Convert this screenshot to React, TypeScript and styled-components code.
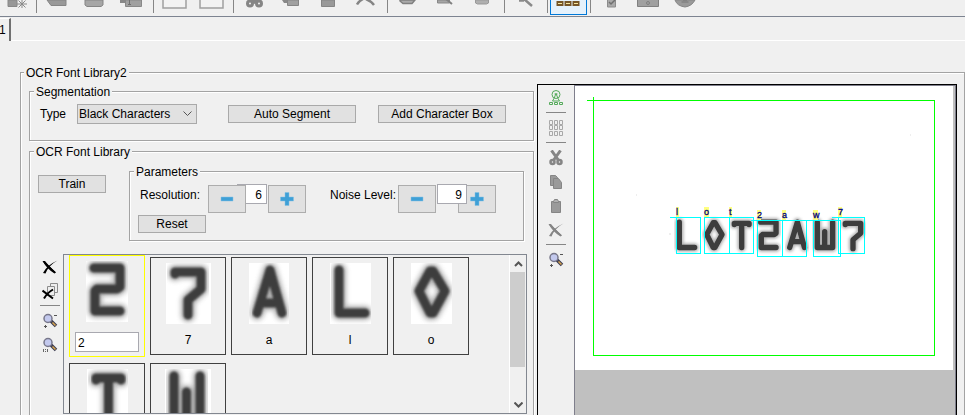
import React from 'react';
import styled, { createGlobalStyle } from 'styled-components';

const GlobalStyle = createGlobalStyle`
  *, *::before, *::after { box-sizing: border-box; }
  html, body { margin: 0; padding: 0; background: #f0f0f0; }
  body, button, input, select {
    font-family: "Liberation Sans", Arial, sans-serif;
    font-size: 12px;
    line-height: 15px;
    color: #000;
  }
`;

const Window = styled.div`
  display: flex;
  flex-direction: column;
  height: 100vh;
  overflow: hidden;
  background: #f0f0f0;
`;

const Toolbar = styled.div`
  display: flex;
  flex: none;
  height: 17px;
  overflow: hidden;
  border-bottom: 1px solid #7d8491;
`;

const ToolButton = styled.button<{ $active?: boolean }>`
  flex: none;
  display: flex;
  justify-content: center;
  align-items: flex-start;
  width: 37px;
  height: 15px;
  padding: 0;
  border: 1px solid ${p => (p.$active ? '#0078d7' : 'transparent')};
  border-top: 0;
  background: ${p => (p.$active ? '#e5f1fb' : 'transparent')};
  overflow: hidden;

  &:first-child { width: 33px; }

  svg { flex: none; display: block; }
`;

const Separator = styled.div`
  flex: none;
  width: 6px;
  height: 13px;
  border-left: 1px solid #868686;
  margin-left: 3px;
  margin-right: -3px;
`;

const TabStrip = styled.nav`
  display: flex;
  flex: none;
  height: 25px;
  margin-top: 1px;
`;

const Tab = styled.button`
  width: 11px;
  height: 23px;
  padding: 0;
  text-align: left;
  text-indent: -1px;
  border: 0;
  border-top: 1px solid #fff;
  border-right: 2px solid #707070;
  background: transparent;
`;

const TabRule = styled.div`
  flex: 1;
  height: 23px;
  border-bottom: 1px solid #fff;
`;

const Group = styled.fieldset`
  min-width: 0;
  margin: 0;
  padding: 0;
  border: 1px solid #a3a3a3;
  box-shadow: 1px 1px 0 #fff, inset 1px 1px 0 #fff;
`;

const Legend = styled.legend<{ $inset?: number }>`
  height: 15px;
  margin-left: ${p => p.$inset ?? 4}px;
  padding: 0 2px;
  background: #f0f0f0;
  line-height: 17px;
  white-space: nowrap;
`;

const MainGroup = styled(Group)`
  display: grid;
  flex: 1;
  min-height: 0;
  grid-template-columns: minmax(0, 505fr) minmax(0, 420fr);
  grid-template-rows: minmax(0, 1fr);
  column-gap: 3px;
  margin: 22px 0 0 20px;
  padding: 0 7px 0 8px;
  border-bottom: 0;
`;

const LeftColumn = styled.div`
  display: flex;
  flex-direction: column;
  gap: 3px;
  min-height: 0;
  padding-top: 4px;
`;

const SegmentRow = styled.div`
  display: grid;
  grid-template-columns: auto 129px 128px 128px;
  justify-content: start;
  align-items: center;
  column-gap: 22px;
  padding: 5px 10px 16px;
`;

const TypeLabel = styled.label`
  width: 46px;
  margin-right: -31px;
  padding-top: 1px;
`;

const SelectFrame = styled.span`
  position: relative;
  display: block;
  width: 120px;

  svg { position: absolute; right: 5px; top: 7px; pointer-events: none; }
`;

const Select = styled.select`
  display: block;
  width: 100%;
  height: 20px;
  padding: 1px 20px 0 1px;
  appearance: none;
  border: 1px solid #a9a9a9;
  border-radius: 0;
  background: #e1e1e1;
`;

const PushButton = styled.button<{ $width: number }>`
  flex: none;
  width: ${p => p.$width}px;
  height: 18px;
  padding: 1px 0 0;
  border: 1px solid #a9a9a9;
  background: #e1e1e1;
  line-height: 15px;
  white-space: nowrap;
`;

const LibraryGroup = styled(Group)`
  display: flex;
  flex-direction: column;
  flex: 1;
  min-height: 0;
  border-bottom: 0;
`;

const TrainRow = styled.div`
  display: flex;
  align-items: flex-start;
  gap: 23px;
  padding: 5px 9px 13px 8px;

  > button { margin-top: 11px; }
`;

const ParameterGroup = styled(Group)`
  flex: 1;
  padding: 5px 10px 7px 8px;
`;

const ParameterRow = styled.div`
  display: flex;
  align-items: flex-start;
  height: 31px;
`;

const ParameterLabel = styled.label<{ $width: number }>`
  width: ${p => p.$width}px;
  padding: 4px 0 0 2px;
  white-space: nowrap;
`;

const Gap = styled.span`
  width: 22px;
`;

const StepButton = styled.button<{ $shift?: number; $front?: boolean }>`
  position: relative;
  z-index: ${p => (p.$front ? 2 : 0)};
  flex: none;
  display: grid;
  place-items: center;
  width: 38px;
  height: 28px;
  margin: 1px 0 0 ${p => p.$shift ?? 0}px;
  padding: 0;
  border: 1px solid #adadad;
  background: #e1e1e1;
`;

const NumberField = styled.input<{ $shift: number }>`
  position: relative;
  z-index: 1;
  width: 30px;
  height: 20px;
  margin-left: ${p => p.$shift}px;
  padding: 2px 4px 0;
  border: 1px solid #a9a9b0;
  border-radius: 0;
  background: #fff;
  text-align: right;
`;

const LibraryRow = styled.div`
  display: flex;
  flex: 1;
  min-height: 0;
  gap: 1px;
  padding: 0 6px 1px 8px;
`;

const SideTools = styled.div<{ $width: number }>`
  flex: none;
  display: flex;
  flex-direction: column;
  align-items: center;
  width: ${p => p.$width}px;
  padding-top: 1px;
`;

const SideButton = styled.button`
  flex: none;
  display: grid;
  place-items: center;
  width: 24px;
  height: 24px;
  padding: 0;
  border: 0;
  background: transparent;
`;

const SideRule = styled.div`
  flex: none;
  width: 20px;
  height: 1px;
  margin: 2px 0 3px;
  background: #868686;
`;

const ListFrame = styled.div`
  display: flex;
  flex: 1;
  min-width: 0;
  border: 1px solid #828790;
  overflow: hidden;
`;

const GlyphGrid = styled.div`
  display: grid;
  flex: 1;
  grid-template-columns: repeat(auto-fill, 76px);
  align-content: start;
  align-items: center;
  gap: 6px 5px;
  padding-left: 5px;
  overflow: hidden;
`;

const GlyphCell = styled.div<{ $selected?: boolean }>`
  display: flex;
  flex-direction: column;
  align-items: center;
  height: ${p => (p.$selected ? 102 : 98)}px;
  padding-top: 5px;
  border: 1px solid ${p => (p.$selected ? '#ffff00' : '#404040')};
  background: #f0f0f0;
`;

const GlyphName = styled.span`
  margin-top: 9px;
`;

const GlyphInput = styled.input`
  width: 64px;
  height: 20px;
  margin-top: 10px;
  padding: 2px 2px 0;
  border: 1px solid #a9a9b0;
  border-radius: 0;
  background: #fff;
`;

const ScrollBar = styled.div`
  flex: none;
  display: flex;
  flex-direction: column;
  width: 17px;
  border-left: 1px solid #fff;
`;

const ScrollButton = styled.button`
  flex: none;
  display: grid;
  place-items: center;
  height: 17px;
  padding: 0;
  border: 0;
  background: transparent;
`;

const ScrollTrack = styled.div`
  flex: 1;
`;

const ScrollThumb = styled.div`
  width: 15px;
  height: 77%;
  background: #cdcdcd;
`;

const ViewerPanel = styled.section`
  display: flex;
  min-height: 0;
  margin-top: 4px;
  border: 1px solid #000;
  border-bottom: 0;
`;

const ImageArea = styled.div`
  flex: 1;
  min-width: 0;
  padding-right: 2px;
  border: 1px solid #7f7f8c;
  border-bottom: 0;
  background: #c0c0c0;
  overflow: hidden;

  svg { display: block; width: 100%; height: auto; background: #fff; }
`;

type GlyphKey = '2' | '7' | 'a' | 'l' | 'o' | 't' | 'w';

const glyphPaths: Record<GlyphKey, string> = {
  '2': 'M8 7H34V26L31 28H11L9 30V50H34',
  '7': 'M9 11V9H35V26L22 37V52',
  a: 'M8 50L21 7L33 50M12 40H30',
  l: 'M9 7V50H35',
  o: 'M19 8H22L34 28L22 50H19L8 28Z',
  t: 'M9 11V9H34V11M21.500 9V50',
  w: 'M9 7V50H35V7M21.500 23V49',
};

const GlyphShape = ({ name, soft }: { name: GlyphKey; soft: string }) => (
  <g fill="none" strokeLinecap="round" strokeLinejoin="round">
    <path d={glyphPaths[name]} stroke="#7a7a7a" strokeWidth="14" opacity="0.600" filter={`url(#${soft}-halo)`} />
    <path d={glyphPaths[name]} stroke="#3c3c3c" strokeWidth="9" filter={`url(#${soft}-edge)`} />
  </g>
);

const SoftFilters = ({ id }: { id: string }) => (
  <defs>
    <filter id={`${id}-halo`} x="-30%" y="-30%" width="160%" height="160%">
      <feGaussianBlur stdDeviation="2.500" />
    </filter>
    <filter id={`${id}-edge`} x="-20%" y="-20%" width="140%" height="140%">
      <feGaussianBlur stdDeviation="1" />
    </filter>
  </defs>
);

const GlyphPicture = ({ name, width }: { name: GlyphKey; width: number }) => (
  <svg width={width} height="61" viewBox={`0 0 ${width} 61`} aria-hidden="true">
    <SoftFilters id={`thumb-${name}`} />
    <rect width={width} height="61" fill="#fff" />
    <GlyphShape name={name} soft={`thumb-${name}`} />
  </svg>
);

const library: { name: GlyphKey; width: number }[] = [
  { name: '2', width: 42 },
  { name: '7', width: 45 },
  { name: 'a', width: 40 },
  { name: 'l', width: 41 },
  { name: 'o', width: 41 },
  { name: 't', width: 41 },
  { name: 'w', width: 46 },
];

const found: { name: GlyphKey; x: number; y: number; w: number; gx: number; tag: number; lead: number }[] = [
  { name: 'l', x: 101, y: 131, w: 24, gx: 99, tag: 3, lead: 6 },
  { name: 'o', x: 129, y: 131, w: 25, gx: 127, tag: 5, lead: 0 },
  { name: 't', x: 154, y: 131, w: 24, gx: 154, tag: 3, lead: 0 },
  { name: '2', x: 182, y: 134, w: 25, gx: 181, tag: 4, lead: 6 },
  { name: 'a', x: 207, y: 134, w: 24, gx: 210, tag: 4, lead: 0 },
  { name: 'w', x: 238, y: 134, w: 27, gx: 237, tag: 5, lead: 7 },
  { name: '7', x: 263, y: 131, w: 26, gx: 265, tag: 4, lead: 6 },
];

const Inspection = () => (
  <svg viewBox="0 0 378 284" role="img" aria-label="Segmented characters">
    <SoftFilters id="scan" />
    {found.map(f => (
      <g key={f.name} transform={`translate(${f.gx} 132) scale(0.59)`}>
        <GlyphShape name={f.name} soft="scan" />
      </g>
    ))}
    <g fill="none" stroke="#00ff00" shapeRendering="crispEdges">
      <path d="M12 14.500H359.500V269.500H18.500V11" />
    </g>
    <g shapeRendering="crispEdges">
      {found.map(f => (
        <g key={f.name}>
          <rect x={f.x} y={f.y - 10} width={f.tag} height="10" fill="#ffff80" />
          <rect x={f.x + 0.5} y={f.y + 0.5} width={f.w} height="36" fill="none" stroke="#00ffff" />
          <path d={`M${f.x - f.lead} ${f.y + 0.5}h${f.lead}`} stroke="#00ffff" />
        </g>
      ))}
    </g>
    <g fill="#000080" stroke="#000080" strokeWidth="0.300" fontFamily="Liberation Sans, Arial, sans-serif" fontSize="9">
      {found.map(f => (
        <text key={f.name} x={f.x} y={f.y - 2}>{f.name}</text>
      ))}
    </g>
    <path d="M94 148h2M335 49h1M61 109h1" stroke="#ddd" />
  </svg>
);

/* Icons */

const Magnifier = ({ mark }: { mark: 'zoom' | 'actual' }) => (
  <svg width="17" height="17" viewBox="0 0 17 17" aria-hidden="true">
    <path d="M9 8L14 13" stroke="#3c3c50" strokeWidth="3.500" />
    <path d="M10.500 9.500L13.500 12.500" stroke="#d8a650" strokeWidth="1.500" />
    <circle cx="6" cy="5.500" r="4" fill="#c3c9ee" stroke="#77778a" strokeWidth="1.500" />
    {mark === 'zoom' ? (
      <path d="M12 2.500h3M2 13.500h3M3.500 12v3" stroke="#555" />
    ) : (
      <path d="M1.500 12v3M3.500 12v1M3.500 14v1M5.500 12v3" stroke="#666" />
    )}
  </svg>
);

const Cross = ({ color }: { color: string }) => (
  <svg width="16" height="15" viewBox="0 0 16 15" aria-hidden="true">
    <path d="M0.500 1L3 1Q6 5 14 12.500L12.500 13.500Q5 9 0.500 1Z" fill={color} />
    <path d="M15.500 0.500Q7 5 3.500 13.500L1 13Q5 5 15.500 0.500Z" fill={color} />
    <path d="M2 2L7 7L13 12.500" stroke={color} strokeWidth="1.500" />
  </svg>
);

const CrossPages = () => (
  <svg width="17" height="17" viewBox="0 0 17 17" aria-hidden="true">
    <g fill="#eee" stroke="#8c8c8c">
      <path d="M8.500 0.500h7v9h-7z" />
      <path d="M5.500 3.500h7v9h-7z" />
    </g>
    <path d="M0.500 7.500Q5 11 11 15.500" stroke="#000" strokeWidth="2" fill="none" />
    <path d="M11 6.500Q5 10 2 15.500" stroke="#000" strokeWidth="2" fill="none" />
  </svg>
);

const TeachIcon = () => (
  <svg width="16" height="16" viewBox="0 0 16 16" fill="none" stroke="#55aa5a" aria-hidden="true">
    <circle cx="8" cy="4.500" r="4" />
    <path d="M8 3.500L6 8.500L4.500 11H11.500L10 8.500ZM6.500 4h3" />
    <path d="M1.500 12.500h3v2h-3zM6.500 12.500h3v2h-3zM11.500 12.500h3v2h-3z" />
  </svg>
);

const GridIcon = () => (
  <svg width="15" height="16" viewBox="0 0 15 16" fill="none" stroke="#a8a8a8" aria-hidden="true">
    {[0, 5, 11].map(y => (
      <path key={y} d={`M0.500 ${y + 0.5}h3v4h-3zM5.500 ${y + 0.5}h3v4h-3zM10.500 ${y + 0.5}h3v4h-3z`} />
    ))}
  </svg>
);

const ScissorsIcon = () => (
  <svg width="14" height="16" viewBox="0 0 14 16" fill="none" stroke="#858585" aria-hidden="true">
    <path d="M2.500 0.500L10 11M11.500 0.500L4 11" strokeWidth="3" />
    <circle cx="3.500" cy="12" r="2" strokeWidth="2.500" />
    <circle cx="10.500" cy="12" r="2" strokeWidth="2.500" />
  </svg>
);

const CopyIcon = () => (
  <svg width="14" height="14" viewBox="0 0 14 14" fill="#9a9a9a" stroke="#858585" aria-hidden="true">
    <path d="M1.500 0.500h5l2 2v8h-7z" />
    <path d="M4.500 3.500h5l3 4v6h-8z" />
  </svg>
);

const PasteIcon = () => (
  <svg width="12" height="14" viewBox="0 0 12 14" fill="#9a9a9a" stroke="#858585" aria-hidden="true">
    <path d="M1.500 2.500h9v11h-9z" />
    <path d="M3.500 2.500l1-2h3l1 2v1h-5z" fill="#b0b0b0" />
  </svg>
);

const Sign = ({ plus }: { plus?: boolean }) => (
  <svg width="14" height="14" viewBox="0 0 14 14" aria-hidden="true">
    <path d={plus ? 'M5 0.500h4v4.500h4.500v4H9v4.500H5V9H0.500V5H5z' : 'M1 5h12v4H1z'} fill="#3fa0d6" stroke="#85c3e4" strokeWidth="0.500" />
  </svg>
);

const Chevron = ({ up, wide }: { up?: boolean; wide?: boolean }) => (
  <svg width="9" height="6" viewBox="0 0 9 6" fill="none" stroke="#555" strokeWidth={wide ? 1 : 2} aria-hidden="true">
    <path d={up ? 'M1 5L4.500 1.500L8 5' : 'M0.500 0.500L4.500 4.500L8.500 0.500'} />
  </svg>
);

const toolDrawings: Record<string, React.ReactNode> = {
  New: <><path d="M3 0h9v6.500H3z" fill="#989898" stroke="#888" /><path d="M17 0v8M12 4h10M13.500 0.500l7 7M20.500 0.500l-7 7" stroke="#8a8a8a" /></>,
  Open: <path d="M1 0H20V5.500H5L1 0Z" fill="#999" stroke="#858585" />,
  Save: <path d="M2 0H20V5L18 6.500H4L2 5Z" fill="#a6a6a6" stroke="#858585" />,
  'Save all': <><path d="M0 0h6v3H0z" fill="#888" /><path d="M5.500 0h16v6.500h-16z" fill="#a0a0a0" stroke="#888" /><path d="M9.500 0v4M8 4.500h3" stroke="#707070" /></>,
  'View one': <path d="M0 -4H23V8H0Z" fill="#f3f3f3" stroke="#a0a0a0" strokeWidth="1.500" />,
  'View two': <path d="M0 -4H23V8H0Z" fill="#f3f3f3" stroke="#a0a0a0" strokeWidth="1.500" />,
  Cut: <g fill="none" stroke="#858585" strokeWidth="3"><circle cx="7" cy="3.500" r="2.500" /><circle cx="16" cy="3.500" r="2.500" /><path d="M9 0l2.500 2l2.500 -2" /></g>,
  Copy: <><path d="M2 0h7v3H4z" fill="#888" /><path d="M7.500 0h11v5.500h-11z" fill="#a0a0a0" stroke="#858585" /></>,
  Paste: <path d="M4.500 0h13v6.500h-13z" fill="#999" stroke="#858585" />,
  Delete: <path d="M9 -1Q5 1 3 4.500M12 -1Q17 1 20 5" stroke="#858585" strokeWidth="2.500" fill="none" />,
  Stack: <path d="M3 0H18L15 3.500H6L3 1Z" fill="#aaa" stroke="#808080" strokeWidth="1.500" />,
  Inspect: <><path d="M3.500 0h12v3h-12z" fill="#a5a5a5" stroke="#888" /><path d="M12 -1L18 4" stroke="#808080" strokeWidth="2" /></>,
  Print: <path d="M4.500 0h13v3l-2 1h-9l-2 -1z" fill="#b0b0b0" stroke="#999" />,
  Wand: <path d="M5 .500h5M10 -1L18 6" stroke="#8a8a8a" strokeWidth="2.500" />,
  'Character map': <><path d="M-0.500 1h7v5h-7zM7.500 1h7v5h-7zM15.500 1h7v5h-7z" fill="#765526" /><path d="M1 3.500h4M9 3.500h4M17 3.500h4" stroke="#f7e7a0" /></>,
  Check: <><path d="M7.500 -2h8v9h-8z" fill="#aaa" stroke="#8c8c8c" /><path d="M9 2l2 2l4 -4" stroke="#707070" strokeWidth="1.500" fill="none" /></>,
  Camera: <><path d="M0.500 -2h21v8.500h-21z" fill="#a0a0a0" stroke="#808080" /><circle cx="11" cy="3" r="1.500" fill="none" stroke="#808080" /></>,
  Stop: <><path d="M1 0Q3 6 11 7Q18 6 21 0Z" fill="#9a9a9a" stroke="#858585" /><path d="M7.500 2h7M9 0h4" stroke="#777" /></>,
};

const toolGroups = [
  ['New'],
  ['Open', 'Save', 'Save all'],
  ['View one', 'View two'],
  ['Cut', 'Copy', 'Paste', 'Delete'],
  ['Stack', 'Inspect', 'Print'],
  ['Wand'],
  ['Character map'],
  ['Check', 'Camera', 'Stop'],
];

const ToolIcon = ({ name }: { name: string }) => (
  <svg width="25" height="9" viewBox="-1 0 25 9" aria-hidden="true">{toolDrawings[name]}</svg>
);

export default function App() {
  return (
    <>
      <GlobalStyle />
      <Window>
        <Toolbar role="toolbar">
          {toolGroups.map((group, i) => (
            <React.Fragment key={group[0]}>
              {i > 0 && <Separator />}
              {group.map(name => (
                <ToolButton key={name} aria-label={name} $active={name === 'Character map'}>
                  <ToolIcon name={name} />
                </ToolButton>
              ))}
            </React.Fragment>
          ))}
        </Toolbar>
        <TabStrip>
          <Tab>1</Tab>
          <TabRule />
        </TabStrip>

        <MainGroup>
          <Legend $inset={-5}>OCR Font Library2</Legend>
          <LeftColumn>
            <Group>
              <Legend>Segmentation</Legend>
              <SegmentRow>
                <TypeLabel htmlFor="type">Type</TypeLabel>
                <SelectFrame>
                  <Select id="type" defaultValue="black">
                    <option value="black">Black Characters</option>
                    <option value="white">White Characters</option>
                  </Select>
                  <Chevron wide />
                </SelectFrame>
                <PushButton $width={128}>Auto Segment</PushButton>
                <PushButton $width={128}>Add Character Box</PushButton>
              </SegmentRow>
            </Group>

            <LibraryGroup>
              <Legend>OCR Font Library</Legend>
              <TrainRow>
                <PushButton $width={68}>Train</PushButton>
                <ParameterGroup>
                  <Legend $inset={-4}>Parameters</Legend>
                  <ParameterRow>
                    <ParameterLabel htmlFor="resolution" $width={70}>Resolution:</ParameterLabel>
                    <StepButton aria-label="Decrease resolution" $front><Sign /></StepButton>
                    <NumberField id="resolution" defaultValue="6" $shift={-9} />
                    <StepButton aria-label="Increase resolution" $shift={1}><Sign plus /></StepButton>
                    <Gap />
                    <ParameterLabel htmlFor="noise" $width={70}>Noise Level:</ParameterLabel>
                    <StepButton aria-label="Decrease noise level"><Sign /></StepButton>
                    <NumberField id="noise" defaultValue="9" $shift={1} />
                    <StepButton aria-label="Increase noise level" $shift={-9}><Sign plus /></StepButton>
                  </ParameterRow>
                  <PushButton $width={68}>Reset</PushButton>
                </ParameterGroup>
              </TrainRow>

              <LibraryRow>
                <SideTools $width={24}>
                  <SideButton aria-label="Delete character"><Cross color="#000" /></SideButton>
                  <SideButton aria-label="Delete all characters"><CrossPages /></SideButton>
                  <SideRule />
                  <SideButton aria-label="Zoom"><Magnifier mark="zoom" /></SideButton>
                  <SideButton aria-label="Actual size"><Magnifier mark="actual" /></SideButton>
                </SideTools>
                <ListFrame>
                  <GlyphGrid>
                    {library.map((g, i) => (
                      <GlyphCell key={g.name} $selected={i === 0}>
                        <GlyphPicture name={g.name} width={g.width} />
                        {i === 0
                          ? <GlyphInput aria-label="Character name" defaultValue={g.name} />
                          : <GlyphName>{g.name}</GlyphName>}
                      </GlyphCell>
                    ))}
                  </GlyphGrid>
                  <ScrollBar>
                    <ScrollButton aria-label="Scroll up"><Chevron up /></ScrollButton>
                    <ScrollTrack><ScrollThumb /></ScrollTrack>
                    <ScrollButton aria-label="Scroll down"><Chevron /></ScrollButton>
                  </ScrollBar>
                </ListFrame>
              </LibraryRow>
            </LibraryGroup>
          </LeftColumn>

          <ViewerPanel>
            <SideTools $width={36}>
              <SideButton aria-label="Teach characters"><TeachIcon /></SideButton>
              <SideRule />
              <SideButton aria-label="Grid"><GridIcon /></SideButton>
              <SideRule />
              <SideButton aria-label="Cut"><ScissorsIcon /></SideButton>
              <SideButton aria-label="Copy"><CopyIcon /></SideButton>
              <SideButton aria-label="Paste"><PasteIcon /></SideButton>
              <SideButton aria-label="Delete"><Cross color="#858585" /></SideButton>
              <SideRule />
              <SideButton aria-label="Zoom"><Magnifier mark="zoom" /></SideButton>
            </SideTools>
            <ImageArea><Inspection /></ImageArea>
          </ViewerPanel>
        </MainGroup>
      </Window>
    </>
  );
}
